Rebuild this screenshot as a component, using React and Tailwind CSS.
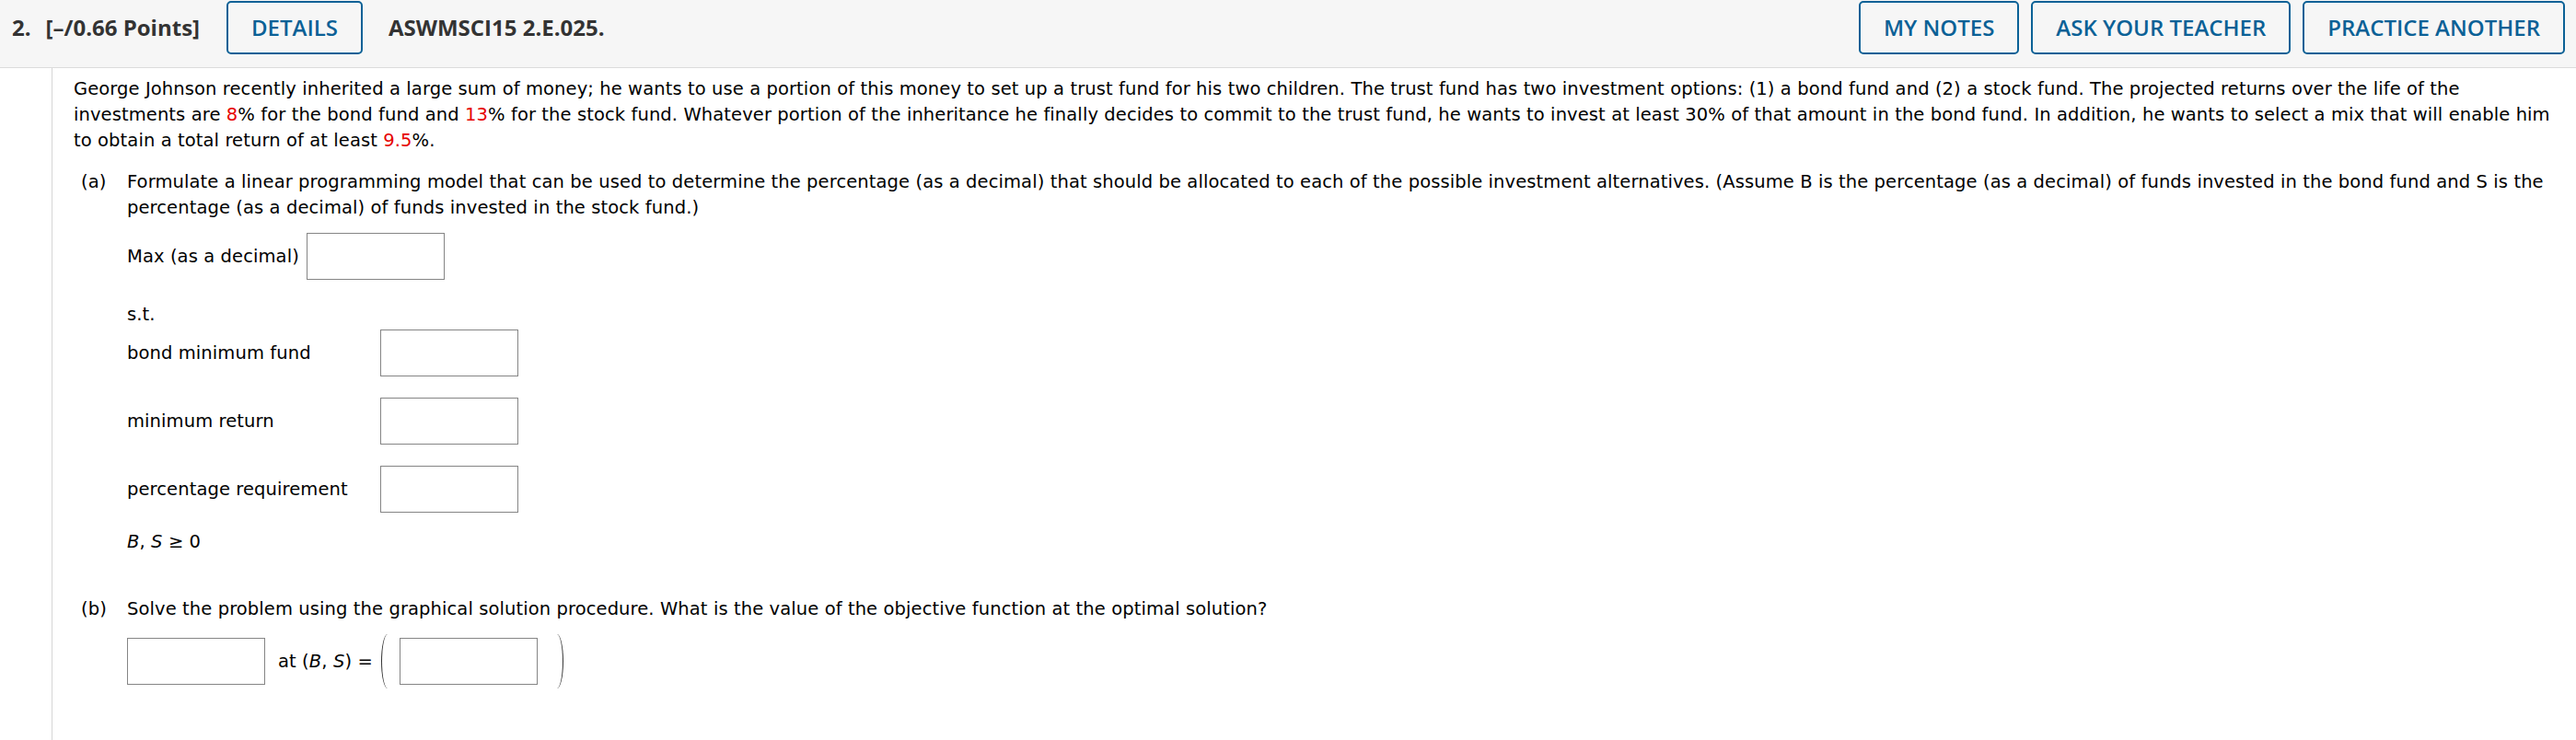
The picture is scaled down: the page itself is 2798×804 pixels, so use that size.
import React from 'react';

const HeaderButton = ({ children }) => (
  <button className="h-[58px] px-[25px] border-2 border-[#0b6196] rounded-[5px] text-[#0b6196] text-[24px] font-semibold font-['Open_Sans','Noto_Sans',sans-serif] bg-transparent">
    {children}
  </button>
);

const AnswerBox = () => (
  <input type="text" className="w-[150px] h-[51px] border border-[#858585] bg-white outline-none" />
);

const Red = ({ children }) => <span className="text-[#e60000]">{children}</span>;

const Constraint = ({ label }) => (
  <div className="flex items-center">
    <span className="w-[275px]">{label}</span>
    <AnswerBox />
  </div>
);

export default function App() {
  return (
    <div className="w-[2798px] h-[804px] bg-white overflow-hidden font-['DejaVu_Sans','Verdana',sans-serif]">
      {/* question header */}
      <div className="flex items-start h-[74px] bg-[#f6f6f6] border-b border-[#dcdcdc] pl-[13px] pr-[12px] pt-[1px]">
        <div className="flex items-center h-[58px] text-[24px] font-bold text-[#333] font-['Open_Sans','Noto_Sans',sans-serif]">
          <span>2.</span>
          <span className="ml-[16px]">[–/0.66 Points]</span>
          <div className="ml-[29px]">
            <HeaderButton>DETAILS</HeaderButton>
          </div>
          <span className="ml-[28px]">ASWMSCI15 2.E.025.</span>
        </div>
        <div className="ml-auto flex gap-[13px]">
          <HeaderButton>MY NOTES</HeaderButton>
          <HeaderButton>ASK YOUR TEACHER</HeaderButton>
          <HeaderButton>PRACTICE ANOTHER</HeaderButton>
        </div>
      </div>

      {/* question body */}
      <div className="flex h-[730px]">
        <div className="w-[56px] shrink-0" />
        <div className="flex-1 border-l border-[#d6d6d6] pl-[23px] pt-[9px] text-[19.5px] leading-[28px] tracking-[0.1px] text-black whitespace-nowrap">
          <p>
            George Johnson recently inherited a large sum of money; he wants to use a portion of this money to set up a trust fund for his two children. The trust fund has two investment options: (1) a bond fund and (2) a stock fund. The projected returns over the life of the
            <br />
            investments are <Red>8</Red>% for the bond fund and <Red>13</Red>% for the stock fund. Whatever portion of the inheritance he finally decides to commit to the trust fund, he wants to invest at least 30% of that amount in the bond fund. In addition, he wants to select a mix that will enable him
            <br />
            to obtain a total return of at least <Red>9.5</Red>%.
          </p>

          <div className="flex mt-[17px] pl-[8px]">
            <span className="w-[50px] shrink-0">(a)</span>
            <div>
              <p>
                Formulate a linear programming model that can be used to determine the percentage (as a decimal) that should be allocated to each of the possible investment alternatives. (Assume B is the percentage (as a decimal) of funds invested in the bond fund and S is the
                <br />
                percentage (as a decimal) of funds invested in the stock fund.)
              </p>
              <div className="flex items-center gap-[8px] mt-[13px]">
                <span>Max (as a decimal)</span>
                <AnswerBox />
              </div>
              <p className="mt-[24px]">s.t.</p>
              <div className="flex flex-col gap-[23px] mt-[2px]">
                <Constraint label="bond minimum fund" />
                <Constraint label="minimum return" />
                <Constraint label="percentage requirement" />
              </div>
              <p className="mt-[18px]">
                <i>B</i>, <i>S</i> ≥ 0
              </p>
            </div>
          </div>

          <div className="flex mt-[45px] pl-[8px]">
            <span className="w-[50px] shrink-0">(b)</span>
            <div>
              <p>Solve the problem using the graphical solution procedure. What is the value of the objective function at the optimal solution?</p>
              <div className="flex items-center mt-[13px]">
                <AnswerBox />
                <span className="ml-[14px]">
                  at (<i>B</i>, <i>S</i>) =
                </span>
                <div className="ml-[9px] w-[14px] h-[59px] border-l-[1.5px] border-[#333] rounded-[50%]" />
                <div className="ml-[6px]">
                  <AnswerBox />
                </div>
                <div className="ml-[14px] w-[14px] h-[59px] border-r-[1.5px] border-[#333] rounded-[50%]" />
              </div>
            </div>
          </div>
        </div>
      </div>
    </div>
  );
}
